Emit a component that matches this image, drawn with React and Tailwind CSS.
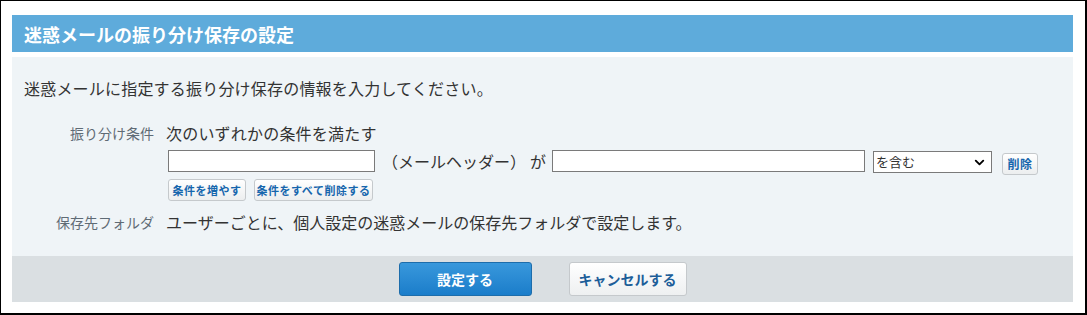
import { ChevronDown } from 'lucide-react';

const jp = { fontFamily: '"Noto Sans CJK JP", "Noto Sans", sans-serif' };

function SmallButton({ children, className = '' }) {
  return (
    <button
      type="button"
      className={`h-[22px] rounded-[3px] border border-[#c5c9cc] bg-gradient-to-b from-white to-[#eceeef] text-[11px] font-bold leading-none tracking-[0.5px] text-[#1666ad] ${className}`}
    >
      {children}
    </button>
  );
}

export default function App() {
  return (
    <div
      style={jp}
      className="w-[1087px] h-[315px] bg-white border-l border-t border-r-2 border-b-2 border-black pl-[11px] pr-[12px] pt-[14px]"
    >
      {/* title bar */}
      <div className="h-[37px] bg-[#5eabdb] pl-[12px] flex items-center">
        <h1 className="text-[18px] font-bold text-white leading-none">迷惑メールの振り分け保存の設定</h1>
      </div>

      {/* form body */}
      <div className="mt-[5px] bg-[#eff4f7] px-[12px] pt-[19px] pb-[22px] text-[#333] leading-[24px]">
        <p className="text-[16px] tracking-[0.2px]">迷惑メールに指定する振り分け保存の情報を入力してください。</p>

        <div className="mt-[21px] grid grid-cols-[130px_1fr] gap-x-[14px]">
          <div className="text-right text-[14px] text-[#5f6b75]">振り分け条件</div>
          <div>
            <div className="text-[16px] -ml-[2px] tracking-[0.2px]">次のいずれかの条件を満たす</div>
            <div className="mt-[5px] flex items-start">
              <input className="w-[207px] h-[22px] border border-[#7a7a7a] bg-white" />
              <span className="ml-[7px] text-[16px] leading-[22px]">（メールヘッダー）</span>
              <span className="ml-[4px] text-[16px] leading-[22px]">が</span>
              <input className="ml-[6px] w-[313px] h-[22px] border border-[#7a7a7a] bg-white" />
              <div className="relative ml-[8px] mt-[1px] w-[119px] h-[22px] border border-[#7a7a7a] bg-white">
                <span className="absolute left-[2px] top-0 text-[13px] leading-[20px] text-[#333]">を含む</span>
                <ChevronDown className="absolute right-[4px] top-[3px] w-[15px] h-[15px] text-black" strokeWidth={3} />
              </div>
              <SmallButton className="ml-[10px] mt-[3px] w-[36px] text-[12px]">削除</SmallButton>
            </div>
            <div className="mt-[4px] flex gap-[8px]">
              <SmallButton className="w-[78px]">条件を増やす</SmallButton>
              <SmallButton className="w-[119px]">条件をすべて削除する</SmallButton>
            </div>
          </div>

          <div className="mt-[9px] text-right text-[14px] text-[#5f6b75]">保存先フォルダ</div>
          <div className="mt-[9px] text-[16px] -ml-[2px]">
            ユーザーごとに、個人設定の迷惑メールの保存先フォルダで設定します。
          </div>
        </div>
      </div>

      {/* footer actions */}
      <div className="h-[46px] bg-[#dadfe2] flex items-center justify-center gap-[37px]">
        <button
          type="button"
          className="w-[133px] h-[34px] rounded-[3px] border border-[#1d6dab] bg-gradient-to-b from-[#3898dc] to-[#1a7dca] text-[14px] font-bold text-white"
        >
          設定する
        </button>
        <button
          type="button"
          className="w-[118px] h-[34px] rounded-[3px] border border-[#c5c9cc] bg-gradient-to-b from-white to-[#eef0f1] text-[14px] font-bold text-[#1d5e99]"
        >
          キャンセルする
        </button>
      </div>
    </div>
  );
}
